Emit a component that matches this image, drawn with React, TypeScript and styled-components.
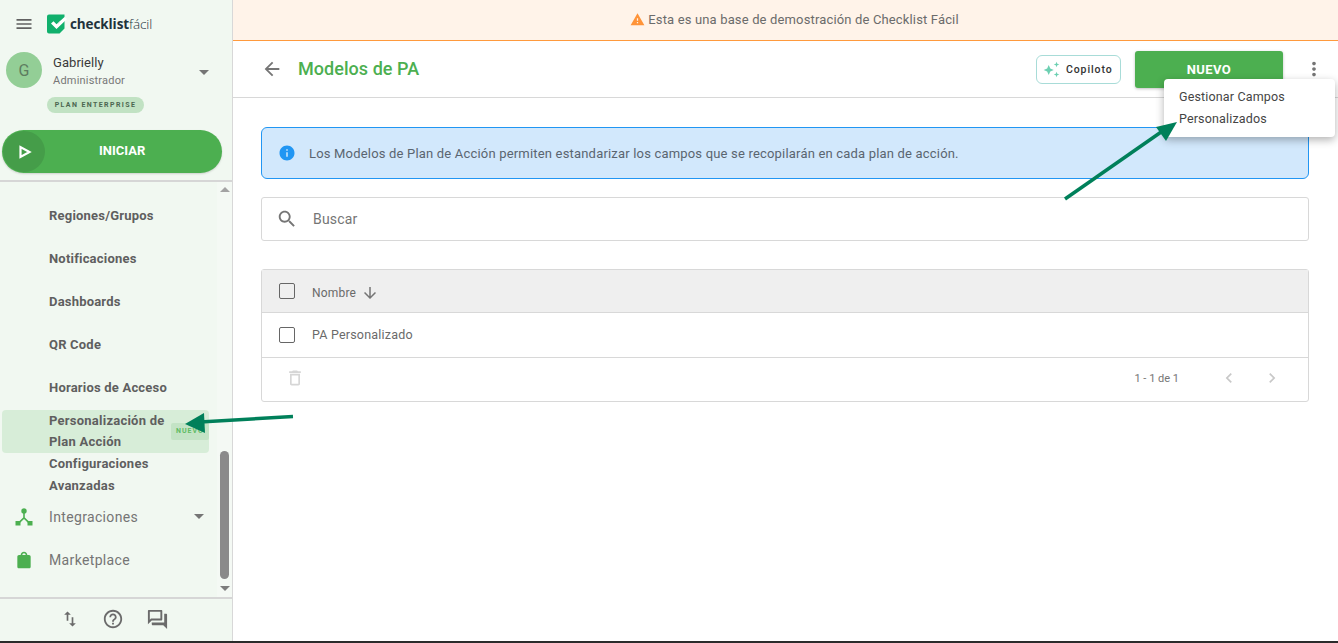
import React from "react";
import styled, { createGlobalStyle } from "styled-components";

const Global = createGlobalStyle`
  html, body { margin: 0; padding: 0; height: 100%; background: #fff; }
  body { font-family: Roboto, "Liberation Sans", sans-serif; overflow: hidden; }
  * { box-sizing: border-box; }
`;

const Page = styled.div`
  position: relative;
  width: 1338px;
  height: 643px;
  display: flex;
  flex-direction: column;
  overflow: hidden;
`;
const Body = styled.div`
  flex: 1;
  min-height: 0;
  display: flex;
`;
const BottomEdge = styled.div`
  height: 2px;
  background: #2b2b2b;
`;

const Sidebar = styled.aside`
  width: 233px;
  flex: none;
  display: flex;
  flex-direction: column;
  background: #f1f8f1;
  border-right: 1px solid #d8d8d8;
`;
const SideTop = styled.div`
  height: 182px;
  flex: none;
  border-bottom: 2px solid #d6d6d6;
  padding: 0 10px 0 2px;
  display: flex;
  flex-direction: column;
`;
const BrandRow = styled.div`
  height: 52px;
  display: flex;
  align-items: center;
  padding: 0 0 4px 12px;
  gap: 13px;
`;
const Logo = styled.div`
  display: flex;
  align-items: center;
  gap: 3px;
  font-family: "Open Sans", sans-serif;
  font-size: 13.5px;
  color: #21323c;
  letter-spacing: -0.1px;
`;
const LogoBold = styled.span`
  font-weight: 700;
`;
const LogoLight = styled.span`
  font-weight: 300;
`;
const UserRow = styled.div`
  display: flex;
  align-items: center;
  padding-left: 4px;
  height: 36px;
`;
const Avatar = styled.div`
  width: 36px;
  height: 36px;
  border-radius: 50%;
  background: #93ce96;
  color: #5d7d60;
  display: flex;
  align-items: center;
  justify-content: center;
  font-size: 16px;
`;
const UserText = styled.div`
  margin-left: 11px;
  padding-top: 2px;
  flex: 1;
  display: flex;
  flex-direction: column;
  gap: 2px;
`;
const UserName = styled.div`
  font-size: 13px;
  color: #3a3a3a;
  line-height: 17px;
  letter-spacing: 0.05px;
`;
const UserRole = styled.div`
  font-size: 11px;
  color: #777;
  line-height: 15px;
  letter-spacing: 0.2px;
`;
const UserCaret = styled.div`
  width: 0;
  height: 0;
  margin: 5px 13px 0 0;
  border-left: 5px solid transparent;
  border-right: 5px solid transparent;
  border-top: 5px solid #757575;
`;
const Caret = styled.div`
  width: 0;
  height: 0;
  border-left: 5px solid transparent;
  border-right: 5px solid transparent;
  border-top: 5px solid #757575;
`;
const PlanBadge = styled.div`
  align-self: flex-start;
  margin: 9px 0 0 45px;
  height: 16px;
  width: 97px;
  border-radius: 8px;
  background: #c1e2c3;
  color: #4c6650;
  font-size: 7px;
  font-weight: 700;
  letter-spacing: 1.4px;
  display: flex;
  align-items: center;
  justify-content: center;
`;
const StartButton = styled.div`
  margin: 17px 0 0 0;
  height: 43px;
  width: 220px;
  border-radius: 22px;
  background: #4caf50;
  box-shadow: 0 1px 2px rgba(0, 0, 0, 0.15);
  display: flex;
  align-items: center;
  color: #fff;
  font-size: 13px;
  font-weight: 700;
`;
const PlayCircle = styled.div`
  width: 42px;
  height: 41px;
  border-radius: 50%;
  background: #459d49;
  display: flex;
  align-items: center;
  justify-content: center;
  margin-left: 1px;
  padding-left: 2px;
`;
const StartLabel = styled.span`
  margin: 0 0 2px 54px;
`;

const ScrollArea = styled.div`
  flex: 1;
  min-height: 0;
  display: flex;
`;
const NavList = styled.nav`
  width: 217px;
  flex: none;
  padding-top: 12px;
  overflow: hidden;
`;
const NavRow = styled.div`
  height: 43px;
  padding-left: 49px;
  display: flex;
  align-items: center;
  font-size: 13px;
  font-weight: 700;
  color: #5f5f5f;
  letter-spacing: 0.2px;
`;
const NavMulti = styled.div<{ $active?: boolean }>`
  position: relative;
  width: 207px;
  height: 43px;
  margin: ${(p) => (p.$active ? "1px 0 0 2px" : "0 0 0 2px")};
  padding-left: 47px;
  border-radius: 4px;
  background: ${(p) => (p.$active ? "#d7edd8" : "transparent")};
  font-size: 13px;
  font-weight: 700;
  line-height: ${(p) => (p.$active ? "21px" : "22px")};
  color: #5f5f5f;
  letter-spacing: 0.24px;
`;
const NewTag = styled.div`
  position: absolute;
  right: 0;
  top: 13px;
  width: 38px;
  height: 17px;
  border-radius: 2px;
  background: #c3e3c5;
  color: #5fbb63;
  font-size: 7px;
  font-weight: 700;
  letter-spacing: 1px;
  line-height: 17px;
  padding-left: 5px;
  overflow: hidden;
`;
const NavIconRow = styled.div`
  height: 43px;
  display: flex;
  align-items: center;
  padding: 0 13px 2px 14px;
  font-size: 14px;
  color: #757575;
  letter-spacing: 0.35px;
`;
const NavLabel = styled.span`
  margin-left: 15px;
  flex: 1;
`;
const ScrollTrack = styled.div`
  width: 15px;
  flex: none;
  display: flex;
  flex-direction: column;
  align-items: center;
  background: #f4f9f4;
  padding-top: 5px;
`;
const ScrollUp = styled.div`
  width: 0;
  height: 0;
  border-left: 5px solid transparent;
  border-right: 5px solid transparent;
  border-bottom: 5px solid #a3a3a3;
`;
const ScrollThumb = styled.div`
  width: 9px;
  height: 128px;
  margin-top: 259px;
  border-radius: 5px;
  background: #8a8a8a;
`;
const ScrollDown = styled.div`
  width: 0;
  height: 0;
  margin-top: 7px;
  border-left: 5px solid transparent;
  border-right: 5px solid transparent;
  border-top: 5px solid #7d7d7d;
`;
const SideFooter = styled.div`
  height: 44px;
  flex: none;
  border-top: 2px solid #d6d6d6;
  display: flex;
  align-items: center;
  padding: 0 0 2px 60px;
  gap: 22px;
`;

const Main = styled.main`
  flex: 1;
  min-width: 0;
  display: flex;
  flex-direction: column;
`;
const DemoBanner = styled.div`
  height: 41px;
  flex: none;
  background: #fff3e9;
  border-bottom: 1px solid #ff9a3d;
  display: flex;
  align-items: center;
  justify-content: center;
  gap: 3px;
  font-size: 13px;
  color: #6b6b6b;
  letter-spacing: 0.15px;
  padding: 0 0 2px 18px;
`;
const HeaderBar = styled.header`
  height: 57px;
  flex: none;
  border-bottom: 1px solid #d8d8d8;
  display: flex;
  align-items: center;
  padding: 0 13px 0 28px;
`;
const Title = styled.h1`
  margin: 0 0 2px 15px;
  font-size: 18px;
  font-weight: 500;
  letter-spacing: 0.05px;
  color: #4caf50;
  flex: 1;
`;
const CopilotButton = styled.div`
  width: 85px;
  height: 29px;
  border-radius: 6px;
  border: 1px solid #a8dcd8;
  display: flex;
  align-items: center;
  padding-left: 5px;
  gap: 5px;
  font-size: 10.5px;
  font-weight: 500;
  letter-spacing: 0.9px;
  color: #333;
`;
const NewButton = styled.div`
  width: 148px;
  height: 37px;
  margin-left: 14px;
  border-radius: 3px;
  background: #4caf50;
  color: #fff;
  font-size: 13px;
  font-weight: 700;
  letter-spacing: 0.4px;
  display: flex;
  align-items: center;
  justify-content: center;
  box-shadow: 0 1px 3px rgba(0, 0, 0, 0.25);
`;
const KebabBox = styled.div`
  margin-left: 20px;
  display: flex;
`;
const Menu = styled.div`
  position: absolute;
  left: 1164px;
  top: 79px;
  width: 171px;
  height: 58px;
  border-radius: 4px;
  background: #fff;
  box-shadow: 0 3px 8px rgba(0, 0, 0, 0.3);
  padding: 7px 15px;
  font-size: 12.5px;
  line-height: 22px;
  color: #444;
  letter-spacing: 0.15px;
`;
const Content = styled.div`
  padding: 29px 29px 0 28px;
  display: flex;
  flex-direction: column;
`;
const InfoAlert = styled.div`
  height: 52px;
  border: 1px solid #2196f3;
  border-radius: 6px;
  background: #d2e8fc;
  display: flex;
  align-items: center;
  padding-left: 16px;
  gap: 13px;
  font-size: 13px;
  color: #5a6570;
  letter-spacing: 0.185px;
`;
const SearchBox = styled.div`
  height: 44px;
  margin-top: 18px;
  border: 1px solid #d8d8d8;
  border-radius: 3px;
  display: flex;
  align-items: center;
  padding-left: 14px;
  gap: 15px;
  font-size: 14px;
  color: #757575;
  letter-spacing: 0.2px;
`;
const Table = styled.div`
  margin-top: 28px;
  border: 1px solid #d8d8d8;
  border-radius: 3px;
  display: flex;
  flex-direction: column;
`;
const TableHead = styled.div`
  height: 43px;
  background: #efefef;
  border-bottom: 1px solid #d8d8d8;
  display: flex;
  align-items: center;
  padding-left: 17px;
  font-size: 12px;
  color: #6a6a6a;
  letter-spacing: 0.2px;
`;
const HeadLabel = styled.div`
  display: flex;
  align-items: center;
  margin-top: 3px;
`;
const TableRow = styled.div`
  height: 45px;
  border-bottom: 1px solid #d8d8d8;
  display: flex;
  align-items: center;
  padding-left: 17px;
  font-size: 12.5px;
  color: #6a6a6a;
  letter-spacing: 0.2px;
`;
const RowLabel = styled.span`
  margin-bottom: 2px;
`;
const TableFoot = styled.div`
  height: 43px;
  display: flex;
  align-items: center;
  padding: 0 26px 3px 23px;
  font-size: 11px;
  color: #767676;
`;
const Check = styled.div`
  width: 16px;
  height: 16px;
  border: 1px solid #666;
  border-radius: 2px;
  margin-right: 17px;
`;
const SortIcon = styled.span`
  display: flex;
  margin-left: 5px;
`;
const PageInfo = styled.span`
  margin-left: auto;
  margin-right: 40px;
`;
const Pager = styled.div`
  display: flex;
  gap: 23px;
`;
const Overlay = styled.svg`
  position: absolute;
  left: 0;
  top: 0;
  width: 1338px;
  height: 643px;
  pointer-events: none;
`;

const I = ({ d, s = 24, c = "#757575" }: { d: string; s?: number; c?: string }) => (
  <svg width={s} height={s} viewBox="0 0 24 24" fill={c}>
    <path d={d} />
  </svg>
);

const P = {
  menu: "M3 18h18v-2H3v2zm0-5h18v-2H3v2zm0-7v2h18V6H3z",
  back: "M20 11H7.83l5.59-5.59L12 4l-8 8 8 8 1.41-1.41L7.83 13H20v-2z",
  more: "M12 8c1.1 0 2-.9 2-2s-.9-2-2-2-2 .9-2 2 .9 2 2 2zm0 2c-1.1 0-2 .9-2 2s.9 2 2 2 2-.9 2-2-.9-2-2-2zm0 6c-1.1 0-2 .9-2 2s.9 2 2 2 2-.9 2-2-.9-2-2-2z",
  search: "M15.5 14h-.79l-.28-.27C15.41 12.59 16 11.11 16 9.5 16 5.91 13.09 3 9.5 3S3 5.91 3 9.5 5.91 16 9.5 16c1.61 0 3.09-.59 4.23-1.57l.27.28v.79l5 4.99L20.49 19l-4.99-5zm-6 0C7.01 14 5 11.99 5 9.5S7.01 5 9.5 5 14 7.01 14 9.5 11.99 14 9.5 14z",
  warn: "M1 21h22L12 2 1 21zm12-3h-2v-2h2v2zm0-4h-2v-4h2v4z",
  info: "M12 2C6.48 2 2 6.48 2 12s4.48 10 10 10 10-4.48 10-10S17.52 2 12 2zm1 15h-2v-6h2v6zm0-8h-2V7h2v2z",
  down: "M20 12l-1.41-1.41L13 16.17V4h-2v12.17l-5.58-5.59L4 12l8 8 8-8z",
  trash: "M6 19c0 1.1.9 2 2 2h8c1.1 0 2-.9 2-2V7H6v12zM8 9h8v10H8V9zm7.5-5l-1-1h-5l-1 1H5v2h14V4z",
  left: "M15.41 7.41L14 6l-6 6 6 6 1.41-1.41L10.83 12z",
  right: "M10 6L8.59 7.41 13.17 12l-4.58 4.59L10 18l6-6z",
  swap: "M16 17.01V10h-2v7.01h-3L15 21l4-3.99h-3zM9 3L5 6.99h3V14h2V6.99h3L9 3z",
  help: "M11 18h2v-2h-2v2zm1-16C6.48 2 2 6.48 2 12s4.48 10 10 10 10-4.48 10-10S17.52 2 12 2zm0 18c-4.41 0-8-3.59-8-8s3.59-8 8-8 8 3.59 8 8-3.59 8-8 8zm0-14c-2.21 0-4 1.79-4 4h2c0-1.1.9-2 2-2s2 .9 2 2c0 2-3 1.75-3 5h2c0-2.25 3-2.5 3-5 0-2.21-1.79-4-4-4z",
  forum: "M15 4v7H5.17L4 12.17V4h11m1-2H3c-.55 0-1 .45-1 1v14l4-4h10c.55 0 1-.45 1-1V3c0-.55-.45-1-1-1zm5 4h-2v9H6v2c0 .55.45 1 1 1h11l4 4V7c0-.55-.45-1-1-1z",
  bag: "M18 6h-2c0-2.21-1.79-4-4-4S8 3.79 8 6H6c-1.1 0-2 .9-2 2v12c0 1.1.9 2 2 2h12c1.1 0 2-.9 2-2V8c0-1.1-.9-2-2-2zm-6-2c1.1 0 2 .9 2 2h-4c0-1.1.9-2 2-2z",
};

const LogoMark = () => (
  <svg width="20" height="20" viewBox="0 0 20 20">
    <path d="M0 2.500A2 2 0 0 1 2 .5h15.500v14l-5 5H2a2 2 0 0 1-2-2z" fill="#10b06c" />
    <path d="M4 9.500l2.500-2.200 3 3L17.500 3 20 5 9.500 15z" fill="#fff" />
    <path d="M9.500 15l2.500-7 1.500-1.500L10 13z" fill="#cfdcd6" />
  </svg>
);

const Hub = () => (
  <svg width="20" height="20" viewBox="0 0 20 20" fill="#4caf50">
    <circle cx="10" cy="4" r="2.700" />
    <rect x="1.500" y="14" width="5" height="4.500" />
    <rect x="13.500" y="14" width="5" height="4.500" />
    <path d="M9.200 6h1.600v4.500l4.200 4-1.100 1.200L10 12l-3.900 3.700L5 14.500l4.200-4z" />
  </svg>
);

const Play = () => (
  <svg width="14" height="14" viewBox="0 0 14 14" fill="none" stroke="#fff" strokeWidth="2.200">
    <path d="M2.500 2v10L11.500 7z" />
  </svg>
);

const Sparkle = () => (
  <svg width="19" height="19" viewBox="0 0 17 17" fill="#6dd0b2">
    <path d="M6 4.500l1.400 3.100 3.100 1.400-3.100 1.400L6 13.500l-1.400-3.100L1.500 9l3.100-1.400z" />
    <path d="M13 1.500l.7 1.800 1.800.7-1.800.7-.7 1.800-.7-1.800-1.800-.7 1.800-.7zM13 10.500l.7 1.800 1.800.7-1.800.7-.7 1.800-.7-1.800-1.800-.7 1.800-.7z" />
  </svg>
);

export default function App() {
  return (
    <Page>
      <Global />
      <Body>
        <Sidebar>
          <SideTop>
            <BrandRow>
              <I d={P.menu} s={20} c="#616161" />
              <Logo>
                <LogoMark />
                <span>
                  <LogoBold>checklist</LogoBold>
                  <LogoLight>fácil</LogoLight>
                </span>
              </Logo>
            </BrandRow>
            <UserRow>
              <Avatar>G</Avatar>
              <UserText>
                <UserName>Gabrielly</UserName>
                <UserRole>Administrador</UserRole>
              </UserText>
              <UserCaret />
            </UserRow>
            <PlanBadge>PLAN ENTERPRISE</PlanBadge>
            <StartButton>
              <PlayCircle>
                <Play />
              </PlayCircle>
              <StartLabel>INICIAR</StartLabel>
            </StartButton>
          </SideTop>
          <ScrollArea>
            <NavList>
              <NavRow>Regiones/Grupos</NavRow>
              <NavRow>Notificaciones</NavRow>
              <NavRow>Dashboards</NavRow>
              <NavRow>QR Code</NavRow>
              <NavRow>Horarios de Acceso</NavRow>
              <NavMulti $active>
                Personalización de
                <br />
                Plan Acción
                <NewTag>NUEVO</NewTag>
              </NavMulti>
              <NavMulti>
                Configuraciones
                <br />
                Avanzadas
              </NavMulti>
              <NavIconRow>
                <Hub />
                <NavLabel>Integraciones</NavLabel>
                <Caret />
              </NavIconRow>
              <NavIconRow>
                <I d={P.bag} s={20} c="#4caf50" />
                <NavLabel>Marketplace</NavLabel>
              </NavIconRow>
            </NavList>
            <ScrollTrack>
              <ScrollUp />
              <ScrollThumb />
              <ScrollDown />
            </ScrollTrack>
          </ScrollArea>
          <SideFooter>
            <I d={P.swap} s={20} c="#6b6b6b" />
            <I d={P.help} s={22} c="#6b6b6b" />
            <I d={P.forum} s={23} c="#6b6b6b" />
          </SideFooter>
        </Sidebar>
        <Main>
          <DemoBanner>
            <I d={P.warn} s={15} c="#ff9338" />
            Esta es una base de demostración de Checklist Fácil
          </DemoBanner>
          <HeaderBar>
            <I d={P.back} s={22} />
            <Title>Modelos de PA</Title>
            <CopilotButton>
              <Sparkle />
              Copiloto
            </CopilotButton>
            <NewButton>NUEVO</NewButton>
            <KebabBox>
              <I d={P.more} s={22} />
            </KebabBox>
          </HeaderBar>
          <Content>
            <InfoAlert>
              <I d={P.info} s={18} c="#2196f3" />
              Los Modelos de Plan de Acción permiten estandarizar los campos que se recopilarán en cada plan de acción.
            </InfoAlert>
            <SearchBox>
              <I d={P.search} s={22} />
              Buscar
            </SearchBox>
            <Table>
              <TableHead>
                <Check />
                <HeadLabel>
                  Nombre
                  <SortIcon>
                    <I d={P.down} s={18} />
                  </SortIcon>
                </HeadLabel>
              </TableHead>
              <TableRow>
                <Check />
                <RowLabel>PA Personalizado</RowLabel>
              </TableRow>
              <TableFoot>
                <I d={P.trash} s={20} c="#d6d6d6" />
                <PageInfo>1 - 1 de 1</PageInfo>
                <Pager>
                  <I d={P.left} s={20} c="#c8c8c8" />
                  <I d={P.right} s={20} c="#c8c8c8" />
                </Pager>
              </TableFoot>
            </Table>
          </Content>
        </Main>
      </Body>
      <BottomEdge />
      <Menu>
        Gestionar Campos
        <br />
        Personalizados
      </Menu>
      <Overlay viewBox="0 0 1338 643">
        <path d="M293 416.500L200 422" stroke="#00805a" strokeWidth="3.500" fill="none" />
        <path d="M185 424L204 413L205 433z" fill="#00805a" />
        <path d="M1065 199L1164 130" stroke="#00805a" strokeWidth="3.500" fill="none" />
        <path d="M1177 122L1166 141L1156 127z" fill="#00805a" />
      </Overlay>
    </Page>
  );
}
